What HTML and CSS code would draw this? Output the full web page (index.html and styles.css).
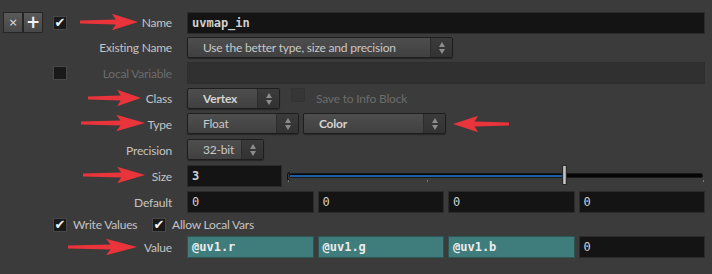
FILE: index.html
```html
<!DOCTYPE html>
<html lang="en">
<head>
    <meta charset="UTF-8">
    <title>Attribute Wrangle - Bind</title>
    <link rel="stylesheet" href="styles.css">
</head>
<body>
    <div class="panel">
        <div class="grid">
            <!-- Name -->
            <div class="lbl">
                <div class="lead">
                    <div class="tools">
                        <button class="tool">&times;</button>
                        <button class="tool plus">+</button>
                    </div>
                    <span class="check on">&#10004;</span>
                </div>
                <span class="text">Name</span>
            </div>
            <div class="field mono bold">uvmap_in</div>

            <!-- Existing Name -->
            <div class="lbl"><span class="text">Existing Name</span></div>
            <div class="ctrl">
                <div class="drop w-exist">
                    <span class="val">Use the better type, size and precision</span>
                    <span class="spin"><i class="up"></i><i class="down"></i></span>
                </div>
            </div>

            <!-- Local Variable -->
            <div class="lbl">
                <div class="lead end"><span class="check"></span></div>
                <span class="text off">Local Variable</span>
            </div>
            <div class="field disabled"></div>

            <!-- Class -->
            <div class="lbl"><span class="text">Class</span></div>
            <div class="ctrl">
                <div class="drop w-class">
                    <span class="val bold">Vertex</span>
                    <span class="spin"><i class="up"></i><i class="down"></i></span>
                </div>
                <span class="check ghost"></span>
                <span class="off">Save to Info Block</span>
            </div>

            <!-- Type -->
            <div class="lbl"><span class="text">Type</span></div>
            <div class="ctrl">
                <div class="drop w-float">
                    <span class="val">Float</span>
                    <span class="spin"><i class="up"></i><i class="down"></i></span>
                </div>
                <div class="drop w-color">
                    <span class="val bold">Color</span>
                    <span class="spin"><i class="up"></i><i class="down"></i></span>
                </div>
            </div>

            <!-- Precision -->
            <div class="lbl"><span class="text">Precision</span></div>
            <div class="ctrl">
                <div class="drop w-prec">
                    <span class="val">32-bit</span>
                    <span class="spin"><i class="up"></i><i class="down"></i></span>
                </div>
            </div>

            <!-- Size -->
            <div class="lbl"><span class="text">Size</span></div>
            <div class="ctrl">
                <div class="field mono bold w-size">3</div>
                <div class="slider">
                    <span class="cap"></span>
                    <div class="track"><div class="fill" style="width: 273px"></div></div>
                    <span class="handle" style="left: 275px"></span>
                    <span class="tick" style="left: 1px"></span>
                    <span class="tick" style="left: 140px"></span>
                    <span class="tick" style="left: 416px"></span>
                </div>
            </div>

            <!-- Default -->
            <div class="lbl"><span class="text">Default</span></div>
            <div class="ctrl quad">
                <div class="field mono">0</div>
                <div class="field mono">0</div>
                <div class="field mono">0</div>
                <div class="field mono">0</div>
            </div>

            <!-- toggles -->
            <div class="opts">
                <label class="opt"><span class="check on">&#10004;</span>Write Values</label>
                <label class="opt"><span class="check on">&#10004;</span>Allow Local Vars</label>
            </div>

            <!-- Value -->
            <div class="lbl"><span class="text">Value</span></div>
            <div class="ctrl quad">
                <div class="field mono bold teal">@uv1.r</div>
                <div class="field mono bold teal">@uv1.g</div>
                <div class="field mono bold teal">@uv1.b</div>
                <div class="field mono">0</div>
            </div>
        </div>

        <!-- red annotation arrows -->
        <svg class="marks" width="712" height="274" viewBox="0 0 712 274">
            <defs>
                <path id="arrow" d="M0 7.4 L37 6.6 L33 0.8 L60 9 L33 17.2 L37 11.4 L0 10.6 Z"/>
            </defs>
            <use href="#arrow" transform="translate(80 13) scale(0.967 1)"/>
            <use href="#arrow" transform="translate(88 89) scale(0.883 1)"/>
            <use href="#arrow" transform="translate(81 114) scale(1.067 1)"/>
            <use href="#arrow" transform="translate(83 166) scale(1.033 1)"/>
            <use href="#arrow" transform="translate(68 238) scale(1.15 1)"/>
            <use href="#arrow" transform="translate(509 115) scale(-0.933 1)"/>
        </svg>
    </div>
</body>
</html>
```

FILE: styles.css
```css
body {
    margin: 0;
    background: #3b3b3b;
    font-family: Lato, "Liberation Sans", sans-serif;
    font-size: 12px;
    letter-spacing: -0.2px;
    color: #c4c4c4;
}

.panel {
    position: relative;
    width: 712px;
    height: 274px;
    overflow: hidden;
}

.grid {
    display: grid;
    grid-template-columns: 172px 1fr;
    grid-template-rows: 21px 21px 22px 21px 22px 22px 22px 22px 15px 22px;
    column-gap: 15px;
    row-gap: 4px;
    padding: 12px 7px 0 0;
}

/* label column */
.lbl {
    display: flex;
    align-items: center;
}

.lbl .text {
    margin-left: auto;
}

.off {
    color: #6c6c6c;
}

.lead {
    width: 67px;
    box-sizing: border-box;
    padding-left: 3px;
    display: flex;
    justify-content: space-between;
    align-items: center;
}

.lead.end {
    justify-content: flex-end;
}

.tools {
    display: flex;
}

.tool {
    width: 20px;
    height: 21px;
    margin: 0;
    padding: 0;
    border: 1px solid #262626;
    background: linear-gradient(#5a5a5a, #474747);
    color: #e0e0e0;
    font-family: "DejaVu Sans", sans-serif;
    font-size: 11px;
    line-height: 19px;
}

.tool.plus {
    font-size: 17px;
    font-weight: bold;
    color: #f0f0f0;
}

.check {
    width: 14px;
    height: 14px;
    box-sizing: border-box;
    background: #191919;
    border: 1px solid #484848;
    color: #f4f4f4;
    font-family: "DejaVu Sans", sans-serif;
    font-size: 13px;
    line-height: 12px;
    text-align: center;
    letter-spacing: 0;
    flex: none;
}

.check.ghost {
    background: #363636;
    border-color: #333;
    margin: 0 7px 0 7px;
}

/* controls column */
.ctrl {
    display: flex;
    align-items: flex-start;
    gap: 4px;
    min-width: 0;
}

.ctrl > .off {
    align-self: center;
}

.field {
    height: 22px;
    box-sizing: border-box;
    background: #141414;
    border: 1px solid #2b2b2b;
    padding-left: 4px;
    display: flex;
    align-items: center;
    color: #d0d0d0;
    overflow: hidden;
    white-space: nowrap;
}

.field.disabled {
    background: #303030;
    border-color: #2e2e2e;
}

.field.teal {
    background: #3f7c7c;
    border-color: #2d5656;
    color: #ececec;
}

.mono {
    font-family: "DejaVu Sans Mono", monospace;
    font-size: 12px;
    letter-spacing: 0;
}

.bold {
    font-weight: bold;
}

.quad .field {
    flex: 1;
}

.w-size {
    width: 95px;
    flex: none;
}

/* dropdown menus */
.drop {
    display: flex;
    height: 21px;
    box-sizing: border-box;
    border: 1px solid #1e1e1e;
    border-radius: 2px;
    background: linear-gradient(#4e4e4e, #404040);
    box-shadow: 0 1px 1px rgba(0, 0, 0, 0.35);
    flex: none;
}

.drop .val {
    flex: 1;
    padding-left: 15px;
    display: flex;
    align-items: center;
    color: #c8c8c8;
    white-space: nowrap;
}

.drop .val.bold {
    color: #d4d4d4;
}

.drop .spin {
    width: 21px;
    background: linear-gradient(#3b3b3b, #323232);
    border-left: 1px solid #2c2c2c;
    display: flex;
    flex-direction: column;
    align-items: center;
    justify-content: center;
    gap: 2px;
}

.spin i {
    width: 0;
    height: 0;
    border-left: 3px solid transparent;
    border-right: 3px solid transparent;
}

.spin .up {
    border-bottom: 5px solid #8c8c8c;
}

.spin .down {
    border-top: 5px solid #8c8c8c;
}

.w-exist { width: 266px; }
.w-class { width: 93px; }
.w-float { width: 112px; }
.w-color { width: 143px; }
.w-prec { width: 77px; }

/* size slider */
.slider {
    position: relative;
    flex: 1;
    height: 22px;
    margin-left: 1px;
}

.slider .cap {
    position: absolute;
    left: 0;
    top: 7px;
    width: 2px;
    height: 7px;
    border: 1px solid #111;
    border-right: none;
    border-radius: 3px 0 0 3px;
}

.track {
    position: absolute;
    left: 2px;
    right: 2px;
    top: 8px;
    height: 5px;
    box-sizing: border-box;
    background: #050505;
    border: 1px solid #1a1a1a;
    border-radius: 2px;
}

.fill {
    height: 2px;
    margin-top: 0.5px;
    background: #1f5fa8;
}

.handle {
    position: absolute;
    top: 0;
    width: 5px;
    height: 20px;
    box-sizing: border-box;
    background: linear-gradient(90deg, #9a9a9a, #c4c4c4 50%, #8a8a8a);
    border: 1px solid #2a2a2a;
}

.tick {
    position: absolute;
    top: 15px;
    width: 1px;
    height: 2px;
    background: #7a7a7a;
}

/* toggles row */
.opts {
    grid-column: 1 / -1;
    display: flex;
    align-items: center;
    padding-left: 53px;
}

.opt {
    display: flex;
    align-items: center;
    gap: 6px;
    width: 99px;
    white-space: nowrap;
}

/* annotations */
.marks {
    position: absolute;
    left: 0;
    top: 0;
    fill: #e8343a;
    pointer-events: none;
}
```
